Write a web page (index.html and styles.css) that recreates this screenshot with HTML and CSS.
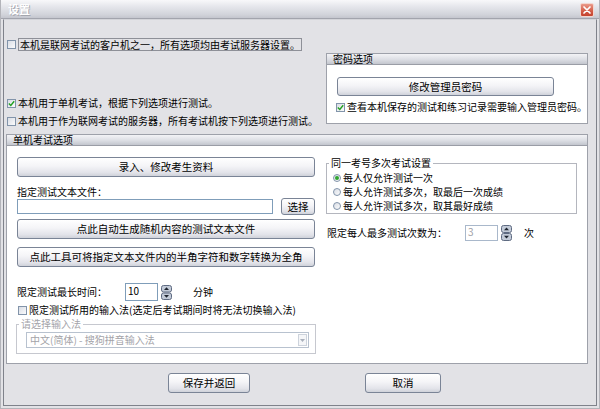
FILE: index.html
```html
<!DOCTYPE html>
<html>
<head>
<meta charset="utf-8">
<title>设置</title>
<link rel="stylesheet" href="styles.css">
</head>
<body>
<div class="window">
  <div class="titlebar">
    <span class="title">设置</span>
    <span class="close"><svg width="12" height="12" viewBox="0 0 12 12"><path d="M3 3 L9 9 M9 3 L3 9" stroke="#fff" stroke-width="1.7" stroke-linecap="round"/></svg></span>
  </div>
  <div class="client">
    <div class="top">
      <div class="topleft">
        <div class="chk row1"><span class="cb"></span><span class="focusrect">本机是联网考试的客户机之一，所有选项均由考试服务器设置。</span></div>
        <div class="chk row2"><span class="cb"><svg width="7" height="7" viewBox="0 0 7 7"><path d="M0.8 3.4 L2.8 5.4 L6.2 1.2" stroke="#22a022" stroke-width="1.4" fill="none"/></svg></span>本机用于单机考试，根据下列选项进行测试。</div>
        <div class="chk row3"><span class="cb"></span>本机用于作为联网考试的服务器，所有考试机按下列选项进行测试。</div>
      </div>
      <div class="panel pwbox">
        <div class="panel-head">密码选项</div>
        <div class="pw-body">
          <div class="btn pwbtn">修改管理员密码</div>
          <div class="chk pwchk"><span class="cb"><svg width="7" height="7" viewBox="0 0 7 7"><path d="M0.8 3.4 L2.8 5.4 L6.2 1.2" stroke="#22a022" stroke-width="1.4" fill="none"/></svg></span>查看本机保存的测试和练习记录需要输入管理员密码。</div>
        </div>
      </div>
    </div>

    <div class="panel single">
      <div class="panel-head">单机考试选项</div>
      <div class="single-body">
        <div class="col-left">
          <div class="btn btn-wide">录入、修改考生资料</div>
          <div class="lbl-file">指定测试文本文件：</div>
          <div class="file-row">
            <div class="input file-input"></div>
            <div class="btn btn-small">选择</div>
          </div>
          <div class="btn btn-wide btn2">点此自动生成随机内容的测试文本文件</div>
          <div class="btn btn-wide btn3">点此工具可将指定文本文件内的半角字符和数字转换为全角</div>
          <div class="time-row">
            <span class="time-lbl">限定测试最长时间：</span>
            <span class="spin-input">10</span>
            <svg class="spin" width="11" height="15" viewBox="0 0 11 15"><rect x="0.5" y="0.5" width="10" height="6.5" rx="2" fill="#c3cbd8" stroke="#5f6b82"/><rect x="0.5" y="8" width="10" height="6.5" rx="2" fill="#c3cbd8" stroke="#5f6b82"/><path d="M3 5 L5.5 2.2 L8 5Z" fill="#1e2430"/><path d="M3 10 L5.5 12.8 L8 10Z" fill="#1e2430"/></svg>
            <span class="unit">分钟</span>
          </div>
          <div class="chk ime-chk"><span class="cb"></span>限定测试所用的输入法(选定后考试期间时将无法切换输入法)</div>
          <fieldset class="ime">
            <legend>请选择输入法</legend>
            <div class="combo"><span>中文(简体) - 搜狗拼音输入法</span><span class="dd"><svg width="5" height="3" viewBox="0 0 5 3"><path d="M0 0 L5 0 L2.5 3Z" fill="#a9b0bc"/></svg></span></div>
          </fieldset>
        </div>
        <div class="col-right">
          <fieldset class="multi">
            <legend>同一考号多次考试设置</legend>
            <div class="radio-row"><span class="radio on"><span class="dot"></span></span>每人仅允许测试一次</div>
            <div class="radio-row"><span class="radio"></span>每人允许测试多次，取最后一次成绩</div>
            <div class="radio-row"><span class="radio"></span>每人允许测试多次，取其最好成绩</div>
          </fieldset>
          <div class="count-row">
            <span class="count-lbl">限定每人最多测试次数为：</span>
            <span class="spin-input count-input">3</span>
            <svg class="spin spin2" width="11" height="16" viewBox="0 0 11 16"><rect x="0.5" y="0.5" width="10" height="7" rx="2" fill="#c3cbd8" stroke="#5f6b82"/><rect x="0.5" y="8.5" width="10" height="7" rx="2" fill="#c3cbd8" stroke="#5f6b82"/><path d="M3 5.3 L5.5 2.5 L8 5.3Z" fill="#1e2430"/><path d="M3 10.7 L5.5 13.5 L8 10.7Z" fill="#1e2430"/></svg>
            <span class="unit2">次</span>
          </div>
        </div>
      </div>
    </div>

    <div class="actions">
      <div class="btn save">保存并返回</div>
      <div class="btn cancel">取消</div>
    </div>
  </div>
</div>
</body>
</html>
```
FILE: styles.css
```css
* { box-sizing: border-box; }
html, body { margin: 0; padding: 0; }
body {
  width: 600px; height: 409px; overflow: hidden;
  font-family: "Noto Sans CJK SC", "Noto Sans", sans-serif;
  font-size: 10px; line-height: 12px; color: #000;
  background: #e2e2e6;
}
.window {
  width: 600px; height: 409px;
  display: flex; flex-direction: column;
  background: #e2e2e6;
  border: 1px solid #b3b4ba; border-top: 0;
}
.titlebar {
  height: 19px; flex: none;
  display: flex; align-items: center; justify-content: space-between;
  padding: 0 5px 0 7px;
  background: linear-gradient(#f8f8fa 0%, #e6e7ec 35%, #d2d4db 80%, #c4c6ce 100%);
  border-bottom: 1px solid #a2a4ad;
}
.title {
  color: #fff; font-size: 11px; font-weight: bold; line-height: 12px;
  text-shadow: 1px 1px 0 #a4a6ae;
}
.close {
  width: 14px; height: 14px; margin-top: 1px;
  border: 1px solid #f3d6cf; border-radius: 2px;
  background: linear-gradient(#ea9a8a, #d25a45 60%, #c4432f);
  display: flex; align-items: center; justify-content: center;
}
.client {
  flex: 1;
  margin: 0 2px 2px 2px;
  border: 1px solid #7f828b; border-top: 1px solid #d3d4d9;
  padding: 0 8px 0 2px;
  display: flex; flex-direction: column;
}

/* checkboxes */
.chk { display: flex; align-items: center; white-space: nowrap; height: 12px; }
.cb {
  width: 9px; height: 9px; flex: none;
  border: 1px solid #8294aa;
  background: linear-gradient(135deg, #d9dde5, #fbfbfc);
  margin-right: 2px;
  display: flex; align-items: center; justify-content: center;
}

/* top area */
.top { display: flex; align-items: flex-start; }
.topleft { padding-top: 18px; display: flex; flex-direction: column; align-items: flex-start; }
.row1 { height: 13px; margin-left: 1px; }
.focusrect { border: 1px solid #8e9098; line-height: 11px; padding: 0 1px; }
.row2 { margin-top: 46px; margin-left: 1px; }
.row3 { margin-top: 6px; margin-left: 1px; }

.panel { border: 1px solid #9ea1aa; background: #fff; }
.panel-head {
  height: 11px; line-height: 10px; padding-left: 6px;
  background: linear-gradient(#f3f3f6, #dcdee4 55%, #c3c6ce);
  border-bottom: 1px solid #9a9da6;
  white-space: nowrap;
}
.pwbox { margin-left: auto; margin-top: 33px; width: 262px; height: 71px; }
.pw-body { padding: 12px 0 0 9px; }
.pwbtn { width: 217px; height: 19px; margin-left: 1px; }
.pwchk { margin-top: 5px; }

/* buttons */
.btn {
  display: flex; align-items: center; justify-content: center;
  border: 1px solid #7a8496; border-radius: 3px;
  background: linear-gradient(#ffffff 0%, #f4f4f7 45%, #e3e4ea 80%, #cfd2da 100%);
  font-size: 10.5px; line-height: 12px; white-space: nowrap;
}

/* single box */
.single { margin-top: 7px; height: 230px; display: flex; flex-direction: column; }
.single-body { display: flex; padding: 11px 0 0 10px; }
.col-left { width: 298px; display: flex; flex-direction: column; }
.col-right { width: 251px; margin-left: 11px; }
.btn-wide { width: 298px; height: 20px; }
.lbl-file { margin-top: 9px; height: 12px; }
.file-row { display: flex; align-items: center; height: 17px; }
.input { background: #fff; border: 1px solid #7f9db9; }
.file-input { width: 256px; height: 15px; }
.btn-small { width: 34px; height: 17px; margin-left: auto; }
.btn2 { margin-top: 4px; }
.btn3 { margin-top: 8px; }

.time-row { display: flex; align-items: center; margin-top: 16px; height: 18px; white-space: nowrap; }
.time-lbl { width: 108px; }
.spin-input {
  display: block; width: 33px; height: 18px;
  background: #fff; border: 1px solid #7f9db9;
  padding-left: 2px; line-height: 14px;
}
.spin { display: block; margin-left: 3px; flex: none; }
.unit { margin-left: 21px; }

.ime-chk { margin-top: 3px; margin-left: 1px; }
fieldset { margin: 0; padding: 0; min-width: 0; }
legend { padding: 0 2px; line-height: 12px; font-size: 10px; }
.ime {
  margin: 2px 0 0 -1px; width: 300px;
  padding: 0 0 5px 0;
  border: 1px solid #c6c8cf;
}
.ime legend { margin-left: 2px; color: #a4a4aa; }
.combo {
  margin: 2px 0 0 9px; width: 283px; height: 16px;
  border: 1px solid #b8c2cf; background: #fff;
  display: flex; align-items: center;
  color: #a3a3a8; padding-left: 3px; white-space: nowrap;
}
.dd {
  margin-left: auto; margin-right: 1px;
  width: 9px; height: 12px;
  border: 1px solid #cdd3dc; background: #f5f6f8;
  display: flex; align-items: center; justify-content: center;
}

/* right column */
.multi { width: 251px; padding: 2px 0 0 0; border: 1px solid #b4b6be; }
.multi legend { margin-left: 2px; }
.radio-row { display: flex; align-items: center; height: 14px; line-height: 12px; margin-left: 6px; white-space: nowrap; }
.radio {
  width: 8px; height: 8px; border-radius: 50%; flex: none;
  border: 1px solid #8294aa;
  background: linear-gradient(135deg, #d9dde5, #fbfbfc);
  margin-right: 2px;
  display: flex; align-items: center; justify-content: center;
}
.dot { width: 4px; height: 4px; border-radius: 50%; background: #2fa52f; }

.count-row { display: flex; align-items: center; margin-top: 11px; height: 16px; white-space: nowrap; }
.count-lbl { width: 138px; margin-left: 1px; }
.count-input { height: 16px; color: #a0a0a6; border-color: #a9b8cb; line-height: 12px; }
.spin2 { margin-left: 3px; }
.unit2 { margin-left: 12px; }

/* bottom buttons */
.actions { display: flex; margin-top: 9px; padding-left: 162px; gap: 115px; }
.save { width: 82px; height: 20px; }
.cancel { width: 76px; height: 20px; }
```
